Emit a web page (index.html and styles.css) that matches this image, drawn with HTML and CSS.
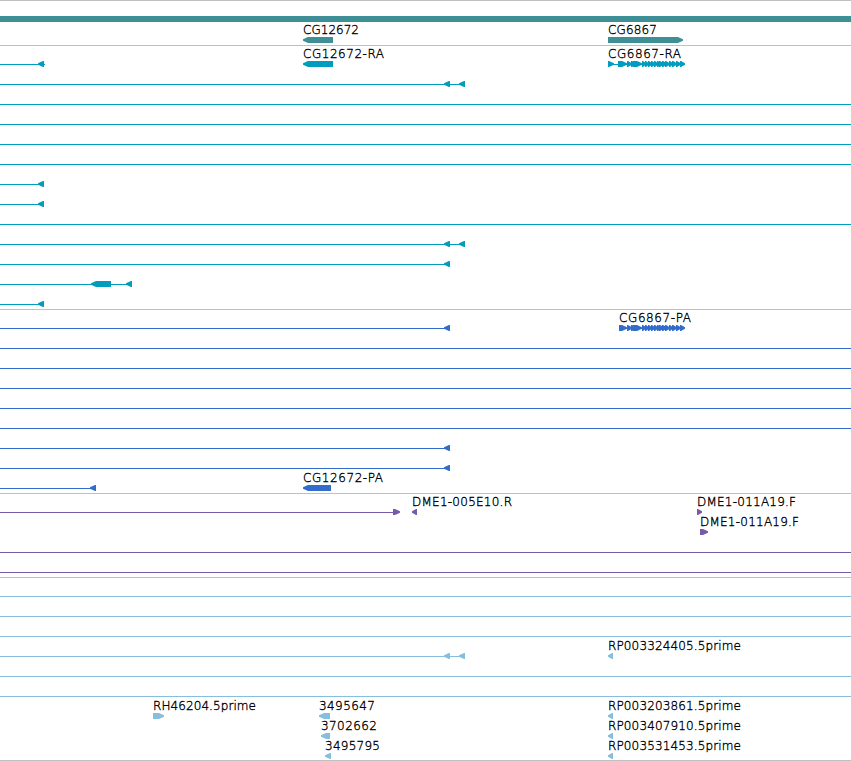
FILE: index.html
```
<!DOCTYPE html>
<html lang="en">
<head>
    <meta charset="UTF-8">
    <meta name="viewport" content="width=device-width, initial-scale=1.0">
    <title>Genome Browser</title>
    <link rel="stylesheet" href="styles.css">
</head>
<body>
    <div id="tracks"></div>

    <script>
        // line: where the intron line ends, left / right: x of the arrow heads,
        // boxes: [start, end, direction], labels: [x, width, text]
        const exons = [
            [627, 632, 1], [631, 637, 1], [633, 642, 1],
            [642, 646, 1], [645, 649, 1], [648, 652, 1], [651, 655, 1],
            [654, 658, 1], [657, 661, 1], [659, 664, 1], [662, 667, 1],
            [665, 670, 1], [669, 673, 1], [672, 677, 1], [676, 681, 1], [680, 685, 1]
        ];
        const full = { line: 851 };
        const short = { line: 44, left: [38] };
        const medium = { line: 450, left: [444] };
        const pair = { line: 465, left: [444, 459] };

        const tracks = [
            { name: 'gene', rows: [
                { boxes: [[303, 333, -1], [608, 683, 1]], labels: [[303, 56, 'CG12672'], [608, 49, 'CG6867']] }
            ] },
            { name: 'transcript', rows: [
                { line: 45, left: [38], from: 608, to: 685,
                  boxes: [[303, 333, -1], [608, 614, 1], [618, 627, 1], ...exons],
                  labels: [[303, 81, 'CG12672-RA'], [608, 73, 'CG6867-RA']] },
                pair, full, full, full, full, short, short, full, pair, medium,
                { line: 132, left: [126], boxes: [[91, 111, -1]] },
                short
            ] },
            { name: 'protein', rows: [
                { line: 450, left: [444], from: 619, to: 685, boxes: [[619, 627, 1], ...exons],
                  labels: [[619, 72, 'CG6867-PA']] },
                full, full, full, full, full, medium, medium,
                { line: 96, left: [90], boxes: [[303, 331, -1]], labels: [[303, 80, 'CG12672-PA']] }
            ] },
            { name: 'insertion', rows: [
                { line: 394, right: [393], boxes: [[412, 417, -1], [697, 702, 1]],
                  labels: [[412, 100, 'DME1-005E10.R'], [697, 99, 'DME1-011A19.F']] },
                { boxes: [[700, 708, 1]], labels: [[700, 99, 'DME1-011A19.F']] },
                full, full
            ] },
            { name: 'est', rows: [
                full, full, full,
                { line: 465, left: [444, 459], boxes: [[608, 613, -1]], labels: [[608, 133, 'RP003324405.5prime']] },
                full, full,
                { boxes: [[153, 164, 1], [319, 330, -1], [608, 613, -1]],
                  labels: [[153, 103, 'RH46204.5prime'], [319, 56, '3495647'], [608, 133, 'RP003203861.5prime']] },
                { boxes: [[321, 330, -1], [608, 613, -1]],
                  labels: [[321, 56, '3702662'], [608, 133, 'RP003407910.5prime']] },
                { boxes: [[325, 331, -1], [608, 613, -1]],
                  labels: [[325, 55, '3495795'], [608, 133, 'RP003531453.5prime']] }
            ] }
        ];

        // d is 1 for an arrow that points right, -1 for left
        function drawArrow(tail, tip, d) {
            const len = Math.min(5, Math.abs(tip - tail) - 1);
            const neck = tip - d * len;
            return `<path d="M${tail} 13H${neck}L${tip} 15.3V16.7L${neck} 19H${tail}Z"/>`;
        }

        function drawRow(row) {
            let out = '';
            if (row.line) out += `<rect x="0" y="16" width="${row.line}" height="1"/>`;
            if (row.from) out += `<rect x="${row.from}" y="16" width="${row.to - row.from}" height="1"/>`;
            (row.left || []).forEach(x => out += drawArrow(x + 6, x, -1));
            (row.right || []).forEach(x => out += drawArrow(x, x + 7, 1));
            (row.boxes || []).forEach(([start, end, d]) => {
                out += d > 0 ? drawArrow(start, end, d) : drawArrow(end, start, d);
            });
            (row.labels || []).forEach(([x, width, text]) => {
                out += `<text x="${x}" y="10" textLength="${width}">${text}</text>`;
            });
            return `<svg class="row" width="851" height="20">${out}</svg>`;
        }

        document.getElementById('tracks').innerHTML = tracks.map(track =>
            `<div class="track ${track.name}">${track.rows.map(drawRow).join('')}</div>`
        ).join('');
    </script>
</body>
</html>
```
FILE: styles.css
```
:root {
    --cor-gene: #3f8f96;
    --cor-transcript: #009dbf;
    --cor-protein: #326dcc;
    --cor-insertion: #775aaa;
    --cor-est: #88bedd;
    --cor-border: #c0c0c0;
}

body {
    margin: 0;
    background-color: white;
    overflow: hidden;
}

#tracks {
    width: 851px;
    border-bottom: 1px solid var(--cor-border);
}

.track {
    border-top: 1px solid var(--cor-border);
    padding: 2px 0 1px;
}

.row {
    display: block;
    overflow: visible;
    fill: currentColor;
}

.row text {
    font-family: 'DejaVu Sans', sans-serif;
    font-size: 12px;
    font-weight: 200;
    fill: black;
    stroke: black;
    stroke-width: 0.35px;
}

.gene {
    color: var(--cor-gene);
    padding-top: 15px;
}

.gene::before {
    content: '';
    display: block;
    height: 6px;
    margin-bottom: 2px;
    background-color: var(--cor-gene);
}

.transcript {
    color: var(--cor-transcript);
}

.protein {
    color: var(--cor-protein);
}

.insertion {
    color: var(--cor-insertion);
}

.est {
    color: var(--cor-est);
    padding-bottom: 0;
}
```
